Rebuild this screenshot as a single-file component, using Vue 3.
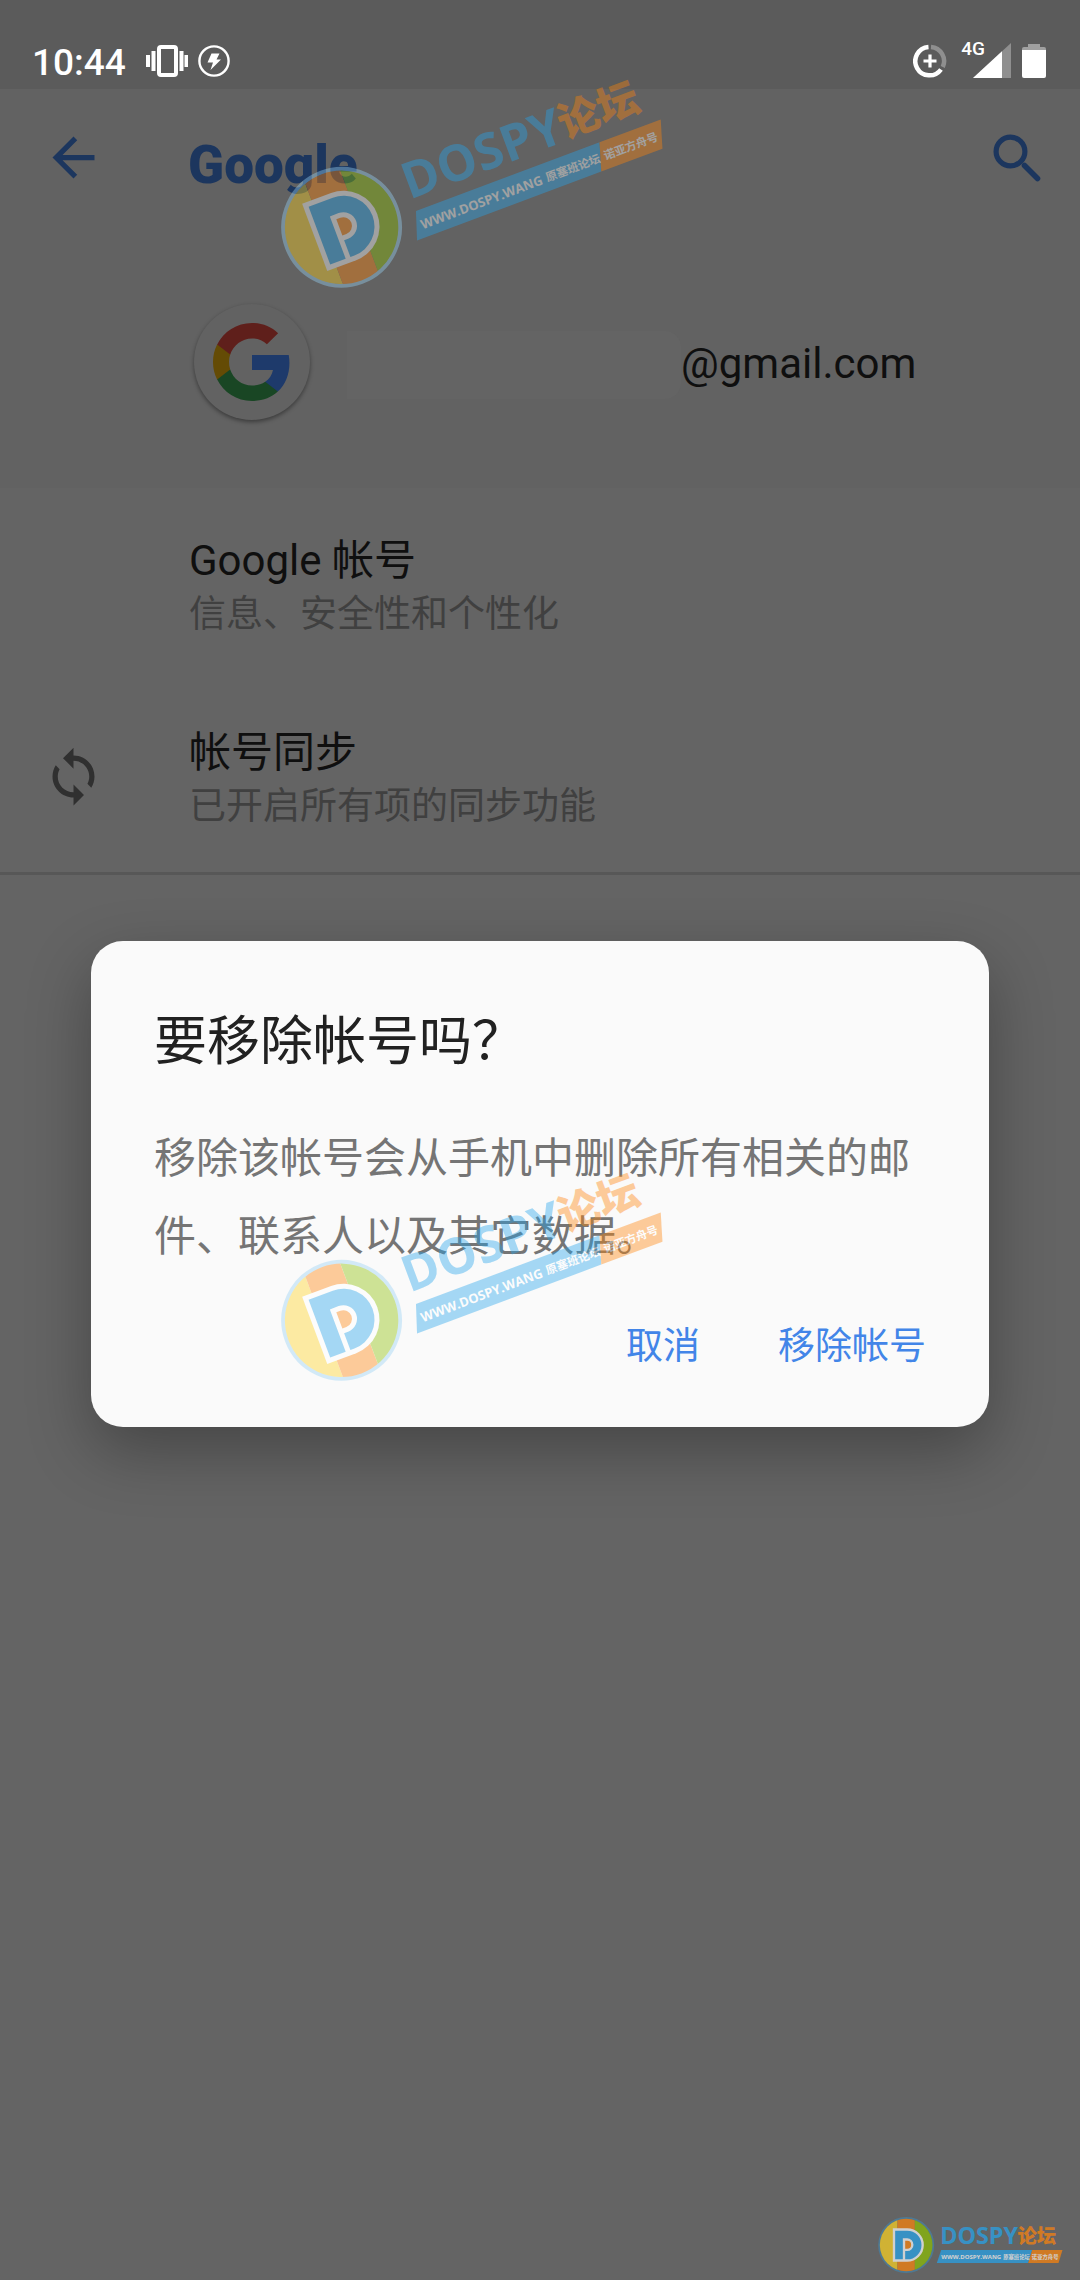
<script setup>
const items = [
  { title: 'Google 帐号', summary: '信息、安全性和个性化', icon: false },
  { title: '帐号同步', summary: '已开启所有项的同步功能', icon: true },
]
const marks = ['mark-top', 'mark-middle', 'mark-corner']
</script>

<template>
  <div class="screen">
    <header class="status">
      <span class="clock">10:44</span>
      <svg class="vibrate" viewBox="0 0 42 32" width="42" height="32" fill="#fff">
        <rect x="13" y="2" width="17" height="28" rx="2" fill="none" stroke="#fff" stroke-width="4" />
        <rect x="0" y="10" width="4" height="12" /><rect x="5.500" y="6" width="4" height="20" />
        <rect x="33.500" y="6" width="4" height="20" /><rect x="38.500" y="10" width="3.500" height="12" />
      </svg>
      <svg class="bolt" viewBox="0 0 32 32" width="32" height="32">
        <circle cx="16" cy="16" r="14.600" fill="none" stroke="#fff" stroke-width="2.400" />
        <path d="M13.500 8.500h8l-3 6h4.500L12.500 25l2.500-7.500H9.500z" fill="#fff" />
      </svg>
      <span class="spacer"></span>
      <svg viewBox="0 0 34 34" width="34" height="34" fill="none" stroke-width="4.500">
        <path d="M18 3A14.200 14.200 0 0 1 29.800 23" stroke="#8f8f8f" />
        <path d="M15.500 3A14.200 14.200 0 1 0 28 25.500" stroke="#fff" />
        <path d="M17 10.500v13M10.500 17h13" stroke="#fff" stroke-width="3.200" />
      </svg>
      <span class="network">4G</span>
      <svg class="signal" viewBox="0 0 38 35" width="38" height="35">
        <path d="M38 0v35H0z" fill="#8f8f8f" />
        <path d="M29 8.300V35H0z" fill="#fff" />
      </svg>
      <svg class="battery" viewBox="0 0 24 34" width="24" height="34">
        <path d="M6 0h12v3h4a2 2 0 0 1 2 2v3H0V5a2 2 0 0 1 2-2h4z" fill="#a0a0a0" />
        <path d="M0 6h24v26a2 2 0 0 1-2 2H2a2 2 0 0 1-2-2z" fill="#fff" />
      </svg>
    </header>

    <nav class="appbar">
      <button class="icon-button" type="button" aria-label="返回">
        <svg viewBox="0 0 24 24" width="63" height="63" fill="#1c365e">
          <path d="M20 11H7.830l5.590-5.590L12 4l-8 8 8 8 1.410-1.410L7.830 13H20v-2z" />
        </svg>
      </button>
      <h1>Google</h1>
      <button class="icon-button" type="button" aria-label="搜索">
        <svg viewBox="0 0 48 48" width="48" height="48" fill="none" stroke="#1c365e">
          <circle cx="17.500" cy="17.500" r="14.400" stroke-width="5.200" />
          <path d="M31.500 31.500L44.500 44.500" stroke-width="5.600" stroke-linecap="round" />
        </svg>
      </button>
    </nav>

    <main>
      <section class="account">
        <span class="avatar">
          <svg viewBox="2 2 44 44" width="78" height="78">
            <path fill="#1e3a6b" d="M45.120 24.500c0-1.560-.14-3.060-.4-4.500H24v8.510h11.840c-.51 2.750-2.060 5.080-4.390 6.640v5.520h7.110c4.160-3.830 6.560-9.470 6.560-16.170z" />
            <path fill="#194624" d="M24 46c5.940 0 10.920-1.970 14.560-5.330l-7.110-5.520c-1.970 1.320-4.490 2.100-7.450 2.100-5.730 0-10.580-3.870-12.310-9.070H4.340v5.700C7.960 41.070 15.400 46 24 46z" />
            <path fill="#644b05" d="M11.690 28.180C11.250 26.860 11 25.450 11 24s.25-2.860.69-4.180v-5.700H4.340C2.850 17.090 2 20.450 2 24c0 3.550.85 6.910 2.340 9.880l7.350-5.700z" />
            <path fill="#5f1f1b" d="M24 10.750c3.230 0 6.130 1.110 8.410 3.290l6.310-6.310C34.910 4.180 29.930 2 24 2 15.400 2 7.960 6.930 4.340 14.120l7.350 5.700c1.730-5.200 6.580-9.070 12.310-9.070z" />
          </svg>
        </span>
        <span class="redacted"></span>
        <span class="email">@gmail.com</span>
      </section>

      <ul class="list">
        <li v-for="item in items" :key="item.title">
          <span class="lead">
            <svg v-if="item.icon" viewBox="0 0 24 24" width="63" height="63" fill="#303030">
              <path d="M12 4V1L8 5l4 4V6c3.310 0 6 2.690 6 6 0 1.010-.25 1.970-.7 2.800l1.460 1.460C19.540 15.030 20 13.570 20 12c0-4.420-3.580-8-8-8zm0 14c-3.310 0-6-2.690-6-6 0-1.010.25-1.970.7-2.800L5.240 7.740C4.460 8.970 4 10.430 4 12c0 4.420 3.580 8 8 8v3l4-4-4-4v3z" />
            </svg>
          </span>
          <div class="item-text">
            <p class="item-title">{{ item.title }}</p>
            <p class="item-summary">{{ item.summary }}</p>
          </div>
        </li>
      </ul>
    </main>

    <div class="overlay">
      <section class="dialog" role="dialog" aria-labelledby="dialog-title">
        <h2 id="dialog-title">要移除帐号吗？</h2>
        <p>移除该帐号会从手机中删除所有相关的邮件、联系人以及其它数据。</p>
        <div class="actions">
          <button type="button">取消</button>
          <button type="button">移除帐号</button>
        </div>
      </section>
    </div>

    <svg v-for="mark in marks" :key="mark" class="mark" :class="mark" viewBox="50 48 560 174">
      <clipPath :id="mark"><circle cx="137" cy="135" r="79" /></clipPath>
      <circle class="ring" cx="137" cy="135" r="81" fill="none" stroke-width="6" />
      <g :clip-path="`url(#${mark})`">
        <path fill="#ffd420" d="M50 50h61v172H50z" />
        <path fill="#ff840a" d="M111 50h52v172h-52z" />
        <path fill="#8cc000" d="M163 50h61v172h-61z" />
      </g>
      <path fill="#fff" d="M97 85h43a50 50 0 0 1 0 100H97z" />
      <path fill="#25a5ed" d="M104 92h36a43 43 0 0 1 0 86h-6v-25h6a19 19 0 0 0 0-38h-13v63h-23z" />
      <path fill="#ff840a" d="M134 122h6a12 12 0 0 1 0 24h-6z" />
      <text class="brand" x="239" y="132" fill="#25a5ed">DOSPY</text>
      <text class="brand-cjk" x="471" y="128" fill="#ff840a">论坛</text>
      <path fill="#25a5ed" d="M242 150h273l-12 39H229z" />
      <path fill="#ff840a" d="M515 150h91l-12 39h-91z" />
      <text class="tag" x="242" y="177">WWW.DOSPY.WANG</text>
      <text class="tag-cjk" x="428" y="176">原塞班论坛</text>
      <text class="tag-cjk" x="514" y="176">诺亚方舟号</text>
    </svg>
  </div>
</template>

<style>
body {
  margin: 0;
  background: #646464;
}
</style>

<style scoped>
.screen {
  position: relative;
  min-height: 100vh;
  overflow: hidden;
  background: #646464;
  font-family: Roboto, "Noto Sans CJK SC", sans-serif;
}
h1, h2, p, ul { margin: 0; padding: 0; }
button {
  padding: 0;
  border: 0;
  background: none;
  font: inherit;
}
svg { display: block; flex: none; }

.status {
  box-sizing: border-box;
  display: flex;
  align-items: center;
  height: 89px;
  padding: 32px 34px 0 32px;
  background: #5b5b5b;
  color: #fff;
}
.clock { font-size: 37px; font-weight: 500; line-height: 48px; padding-top: 4px; }
.vibrate { margin-left: 20px; }
.bolt { margin-left: 10px; }
.spacer { flex: 1; }
.network { margin: 0 0 24px 14px; font-size: 19px; font-weight: 500; line-height: 24px; }
.signal { margin-left: -12px; }
.battery { margin-left: 11px; }

.appbar {
  display: flex;
  align-items: center;
  height: 137px;
  padding: 0 39px 0 42px;
  background: #626262;
}
.icon-button { display: flex; }
h1 {
  flex: 1;
  margin-left: 83px;
  padding-top: 14px;
  color: #1c365e;
  font-size: 53px;
  font-weight: 900;
  line-height: 64px;
}

.account {
  display: flex;
  align-items: center;
  height: 117px;
  padding: 77px 0 68px 194px;
  background: #626262;
}
.avatar {
  display: flex;
  align-items: center;
  justify-content: center;
  width: 116px;
  height: 116px;
  border-radius: 50%;
  background: #626262;
  box-shadow: 0 2px 4px rgba(0, 0, 0, 0.4);
}
.redacted {
  width: 334px;
  height: 68px;
  margin: 6px 0 0 37px;
  border-radius: 0 16px 16px 0;
  background: #646464;
}
.email { padding-top: 5px; color: #0f0f0f; font-size: 42px; line-height: 56px; }

.list { list-style: none; border-bottom: 3px solid #575757; }
.list li { display: flex; align-items: center; height: 192px; }
.lead { width: 147px; padding-left: 42px; }
.item-text { padding-top: 8px; }
.item-title { color: #0f0f0f; font-size: 42px; line-height: 54px; }
.item-summary { color: #404040; font-size: 37px; line-height: 54px; }

.overlay {
  position: absolute;
  inset: 0;
  display: flex;
  align-items: center;
  padding: 88px 91px 0;
}
.dialog {
  box-sizing: border-box;
  width: 100%;
  padding: 69px 63px 42px;
  border-radius: 32px;
  background: #fafafa;
  box-shadow: 0 24px 64px rgba(0, 0, 0, 0.3);
}
h2 { color: #212121; font-size: 53px; font-weight: 400; line-height: 64px; }
.dialog p { margin-top: 46px; color: #757575; font-size: 42px; line-height: 78px; }
.actions { display: flex; justify-content: flex-end; gap: 78px; margin-top: 25px; }
.actions button { height: 84px; color: #4285e8; font-size: 37px; }

.mark { position: absolute; width: 402px; height: 125px; opacity: 0.4; overflow: visible; pointer-events: none; }
.mark-top, .mark-middle { left: 279px; transform: rotate(-20.5deg); transform-origin: 62px 62px; }
.mark-top { top: 165px; }
.mark-middle { top: 1258px; }
.mark-corner { right: 16px; bottom: 6px; width: 187px; height: 58px; opacity: 0.7; }
.ring { stroke: #98d2f5; }
.mark-corner .ring { stroke: #4583a9; }
.brand { font: 700 70px "Open Sans", sans-serif; }
.brand-cjk { font: 900 58px "Noto Sans CJK SC", sans-serif; }
.tag { fill: #fff; font: 700 18px "Open Sans", sans-serif; }
.tag-cjk { fill: #fff; font: 700 16px "Noto Sans CJK SC", sans-serif; }
</style>
